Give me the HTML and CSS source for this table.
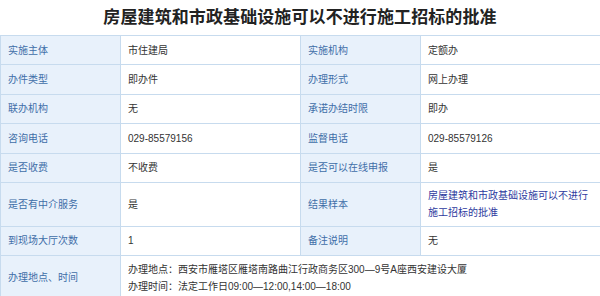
FILE: index.html
```html
<!DOCTYPE html>
<html lang="zh-CN">
<head>
<meta charset="utf-8">
<title>房屋建筑和市政基础设施可以不进行施工招标的批准</title>
<link rel="stylesheet" href="styles.css">
</head>
<body>
<div class="page">
  <h1 class="title">房屋建筑和市政基础设施可以不进行施工招标的批准</h1>
  <table class="info">
    <colgroup>
      <col class="c-label"><col class="c-value"><col class="c-label"><col class="c-value2">
    </colgroup>
    <tr class="r1">
      <th>实施主体</th><td>市住建局</td>
      <th>实施机构</th><td>定额办</td>
    </tr>
    <tr class="r1">
      <th>办件类型</th><td>即办件</td>
      <th>办理形式</th><td>网上办理</td>
    </tr>
    <tr class="r1">
      <th>联办机构</th><td>无</td>
      <th>承诺办结时限</th><td>即办</td>
    </tr>
    <tr class="r1">
      <th>咨询电话</th><td>029-85579156</td>
      <th>监督电话</th><td>029-85579126</td>
    </tr>
    <tr class="r1">
      <th>是否收费</th><td>不收费</td>
      <th>是否可以在线申报</th><td>是</td>
    </tr>
    <tr class="r2">
      <th>是否有中介服务</th><td>是</td>
      <th>结果样本</th><td><a class="link" href="#">房屋建筑和市政基础设施可以不进行施工招标的批准</a></td>
    </tr>
    <tr class="r1">
      <th>到现场大厅次数</th><td>1</td>
      <th>备注说明</th><td>无</td>
    </tr>
    <tr class="r3">
      <th>办理地点、时间</th>
      <td colspan="3">办理地点：西安市雁塔区雁塔南路曲江行政商务区300—9号A座西安建设大厦<br>办理时间：法定工作日09:00—12:00,14:00—18:00</td>
    </tr>
  </table>
</div>
</body>
</html>
```
FILE: styles.css
```css
html, body {
  margin: 0;
  padding: 0;
  background: #ffffff;
}
.page {
  width: 600px;
  height: 296px;
  overflow: hidden;
  font-family: "Liberation Sans", "Noto Sans CJK SC", sans-serif;
}
.title {
  margin: 0;
  height: 35px;
  line-height: 31px;
  font-size: 17px;
  font-weight: 700;
  color: #222222;
  text-align: center;
  font-family: "Noto Sans CJK SC", sans-serif;
  letter-spacing: 0.1px;
}
.info {
  width: 601px;
  border-collapse: collapse;
  table-layout: fixed;
  font-size: 10px;
  line-height: 17px;
}
.c-label { width: 120px; }
.c-value { width: 180px; }
.c-value2 { width: 181px; }
.info th, .info td {
  border: 1px solid #c7dbee;
  padding: 0 7px;
  text-align: left;
  vertical-align: middle;
  font-weight: 400;
}
.info th {
  background: #e8f1fb;
  color: #3f6ea8;
}
.info td {
  background: #ffffff;
  color: #333333;
}
.r1 th, .r1 td { height: 28.4px; }
.r2 th, .r2 td { height: 42.6px; }
.r3 th, .r3 td { height: 44px; }
.link {
  color: #2e3a9e;
  text-decoration: none;
}
```
